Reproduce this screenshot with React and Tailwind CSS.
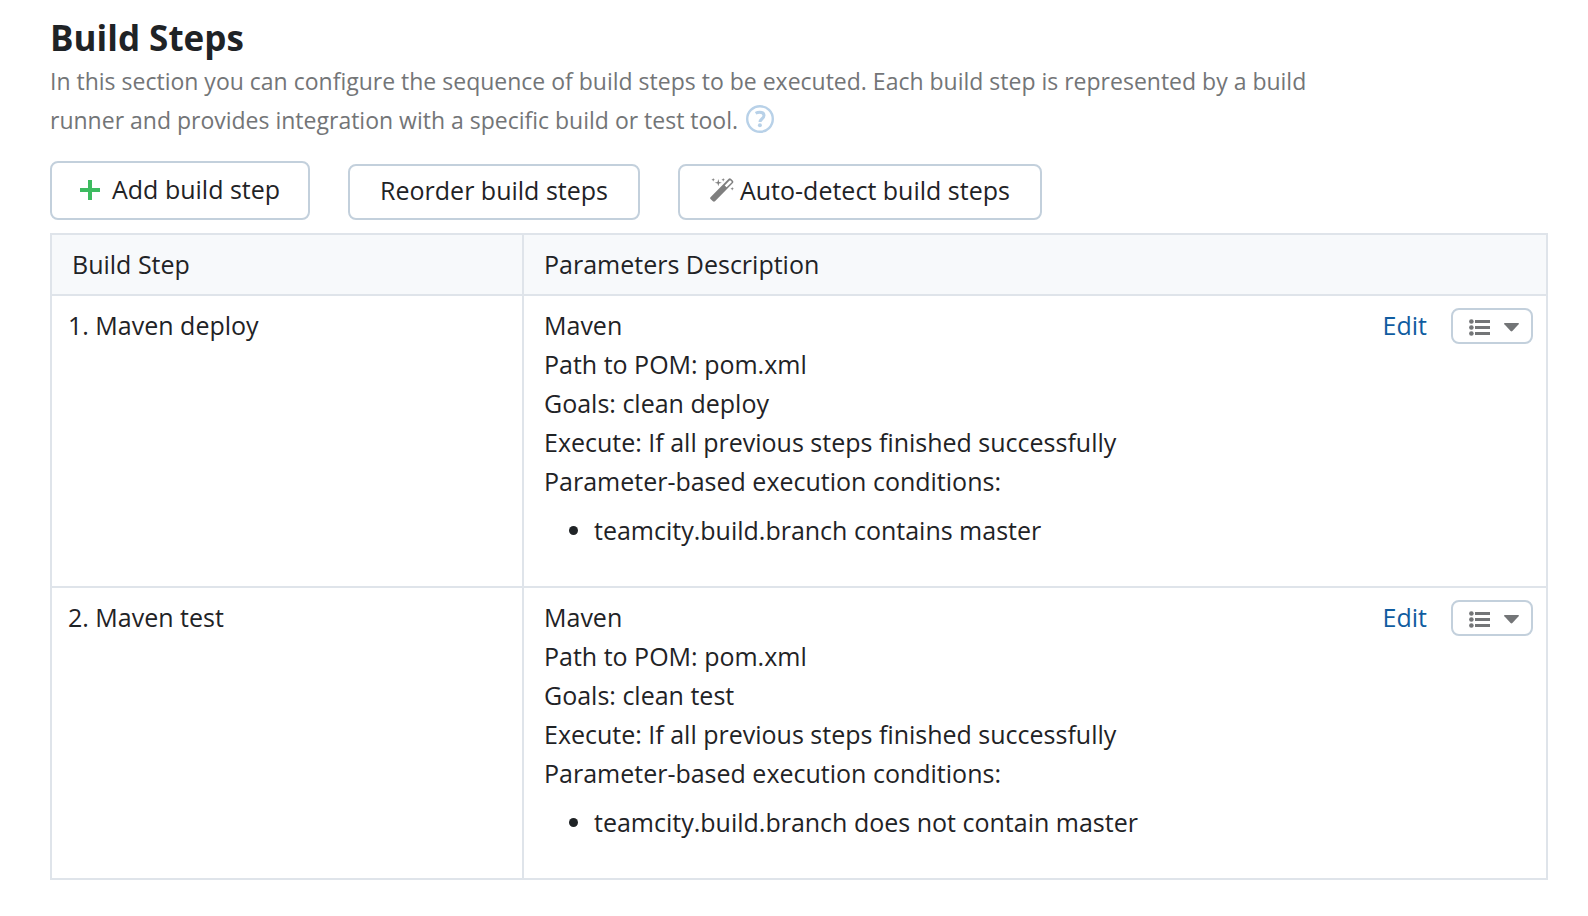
import React from "react";

const steps = [
  {
    name: "1. Maven deploy",
    lines: [
      "Maven",
      "Path to POM: pom.xml",
      "Goals: clean deploy",
      "Execute: If all previous steps finished successfully",
      "Parameter-based execution conditions:",
    ],
    condition: "teamcity.build.branch contains master",
  },
  {
    name: "2. Maven test",
    lines: [
      "Maven",
      "Path to POM: pom.xml",
      "Goals: clean test",
      "Execute: If all previous steps finished successfully",
      "Parameter-based execution conditions:",
    ],
    condition: "teamcity.build.branch does not contain master",
  },
];

function PlusIcon() {
  return (
    <svg width="20" height="20" viewBox="0 0 20 20" fill="#3dbb60" aria-hidden="true">
      <path d="M8 0h4v8h8v4h-8v8H8v-8H0V8h8z" />
    </svg>
  );
}

function HelpIcon() {
  return (
    <svg width="28" height="28" viewBox="0 0 28 28" fill="none" stroke="#b8d1e8" aria-hidden="true">
      <circle cx="14" cy="14" r="12.8" strokeWidth="2.4" />
      <path d="M9.600 8.300C10.900 7.600 12.300 7.300 13.700 7.300c2.700 0 4.300 1.200 4.300 3.300 0 3-4 3.300-4 6.500" strokeWidth="3" />
      <circle cx="13.9" cy="20.3" r="2" fill="#b8d1e8" stroke="none" />
    </svg>
  );
}

function WandIcon() {
  return (
    <svg width="24" height="24" viewBox="0 0 24 24" fill="#7f7f7f" aria-hidden="true">
      <path
        fillRule="evenodd"
        d="M.5 19.200 18.700.8q1.100-.9 2.200 0l2 2q.9 1.100 0 2.200L5 23.300q-1.100.8-2.100 0L.5 21q-.8-.9 0-1.800zM14.700 7.400l1.900 1.900 4.900-4.900q.4-.5 0-.9l-.9-.9q-.5-.4-1 0z"
      />
      <path d="M8.3 1.100 9.100 3.900l2.800.8-2.800.8-.8 2.800-.8-2.800-2.800-.8 2.800-.8z" />
      <path d="M3.200 0l.5 1.300 1.300.5-1.300.5-.5 1.300-.5-1.300-1.300-.5 1.300-.5zM13.200 0l.5 1.300 1.300.5-1.300.5-.5 1.300-.5-1.300-1.300-.5 1.300-.5zM22.200 9l.5 1.300 1.300.5-1.300.5-.5 1.300-.5-1.300-1.300-.5 1.300-.5z" />
    </svg>
  );
}

function ListIcon() {
  return (
    <svg width="21" height="17" viewBox="0 0 21 17" fill="#737577" aria-hidden="true">
      <circle cx="2.4" cy="2.5" r="2.3" />
      <circle cx="2.4" cy="8.5" r="2.3" />
      <circle cx="2.4" cy="14.5" r="2.3" />
      <path d="M6 1h15v3H6zM6 7h15v3H6zM6 13h15v3H6z" />
    </svg>
  );
}

function CaretIcon() {
  return (
    <svg width="15" height="9" viewBox="0 0 15 9" fill="#737577" aria-hidden="true">
      <path d="M.7 0h13.6q1.1.2.3 1.2L8.4 8.1q-.9.9-1.8 0L.4 1.2Q-.4.2.7 0z" />
    </svg>
  );
}

export default function App() {
  return (
    <main className="min-h-screen bg-white pt-4 pr-10 pb-9 pl-[50px] font-['Open_Sans','Noto_Sans',sans-serif] text-[25px] leading-[39px] text-[#1f2326]">
      <h1 className="mb-0.5 text-[35px] leading-[44px] font-bold">Build Steps</h1>
      <p className="max-w-[1280px] text-[23px] leading-[39px] text-[#737577]">
        In this section you can configure the sequence of build steps to be executed. Each build step is
        represented by a build runner and provides integration with a specific build or test tool.
        <a href="#help" aria-label="Help" className="ml-2 inline-block align-[-4px] leading-none">
          <HelpIcon />
        </a>
      </p>

      <div className="mt-[21px] flex flex-wrap items-end gap-[38px]">
        <button type="button" className="flex h-[59px] items-center gap-3 rounded-lg border-2 border-[#c3d0dc] px-[28px] pb-0.5">
          <PlusIcon />
          Add build step
        </button>
        <button type="button" className="flex h-14 items-center rounded-lg border-2 border-[#c3d0dc] px-[30px] pb-1">
          Reorder build steps
        </button>
        <button type="button" className="flex h-14 items-center gap-1.5 rounded-lg border-2 border-[#c3d0dc] px-[30px] pb-1">
          <WandIcon />
          Auto-detect build steps
        </button>
      </div>

      <table className="mt-[13px] w-full table-fixed border-collapse border-2 border-[#dfe4ea]">
        <thead>
          <tr className="bg-[#f7f9fb]">
            <th className="w-[472px] border-2 border-[#dfe4ea] px-5 py-[10px] text-left font-normal">Build Step</th>
            <th className="border-2 border-[#dfe4ea] px-5 py-[10px] text-left font-normal">
              Parameters Description
            </th>
          </tr>
        </thead>
        <tbody>
          {steps.map((step) => (
            <tr key={step.name}>
              <td className="border-2 border-[#dfe4ea] px-4 pt-[10px] align-top">{step.name}</td>
              <td className="border-2 border-[#dfe4ea] pt-[10px] pr-[13px] pb-[36px] pl-5 align-top">
                <div className="flex items-start justify-between">
                  <div>
                    {step.lines.map((line) => (
                      <p key={line}>{line}</p>
                    ))}
                    <ul className="mt-[10px] list-disc pl-[50px]">
                      <li>{step.condition}</li>
                    </ul>
                  </div>
                  <div className="flex items-center gap-6">
                    <a href="#edit" className="text-[#105ca0]">
                      Edit
                    </a>
                    <button
                      type="button"
                      aria-label="Step actions"
                      className="flex h-9 items-center gap-[14px] rounded-lg border-2 border-[#c3d0dc] pt-1 pr-3 pl-4"
                    >
                      <ListIcon />
                      <CaretIcon />
                    </button>
                  </div>
                </div>
              </td>
            </tr>
          ))}
        </tbody>
      </table>
    </main>
  );
}
